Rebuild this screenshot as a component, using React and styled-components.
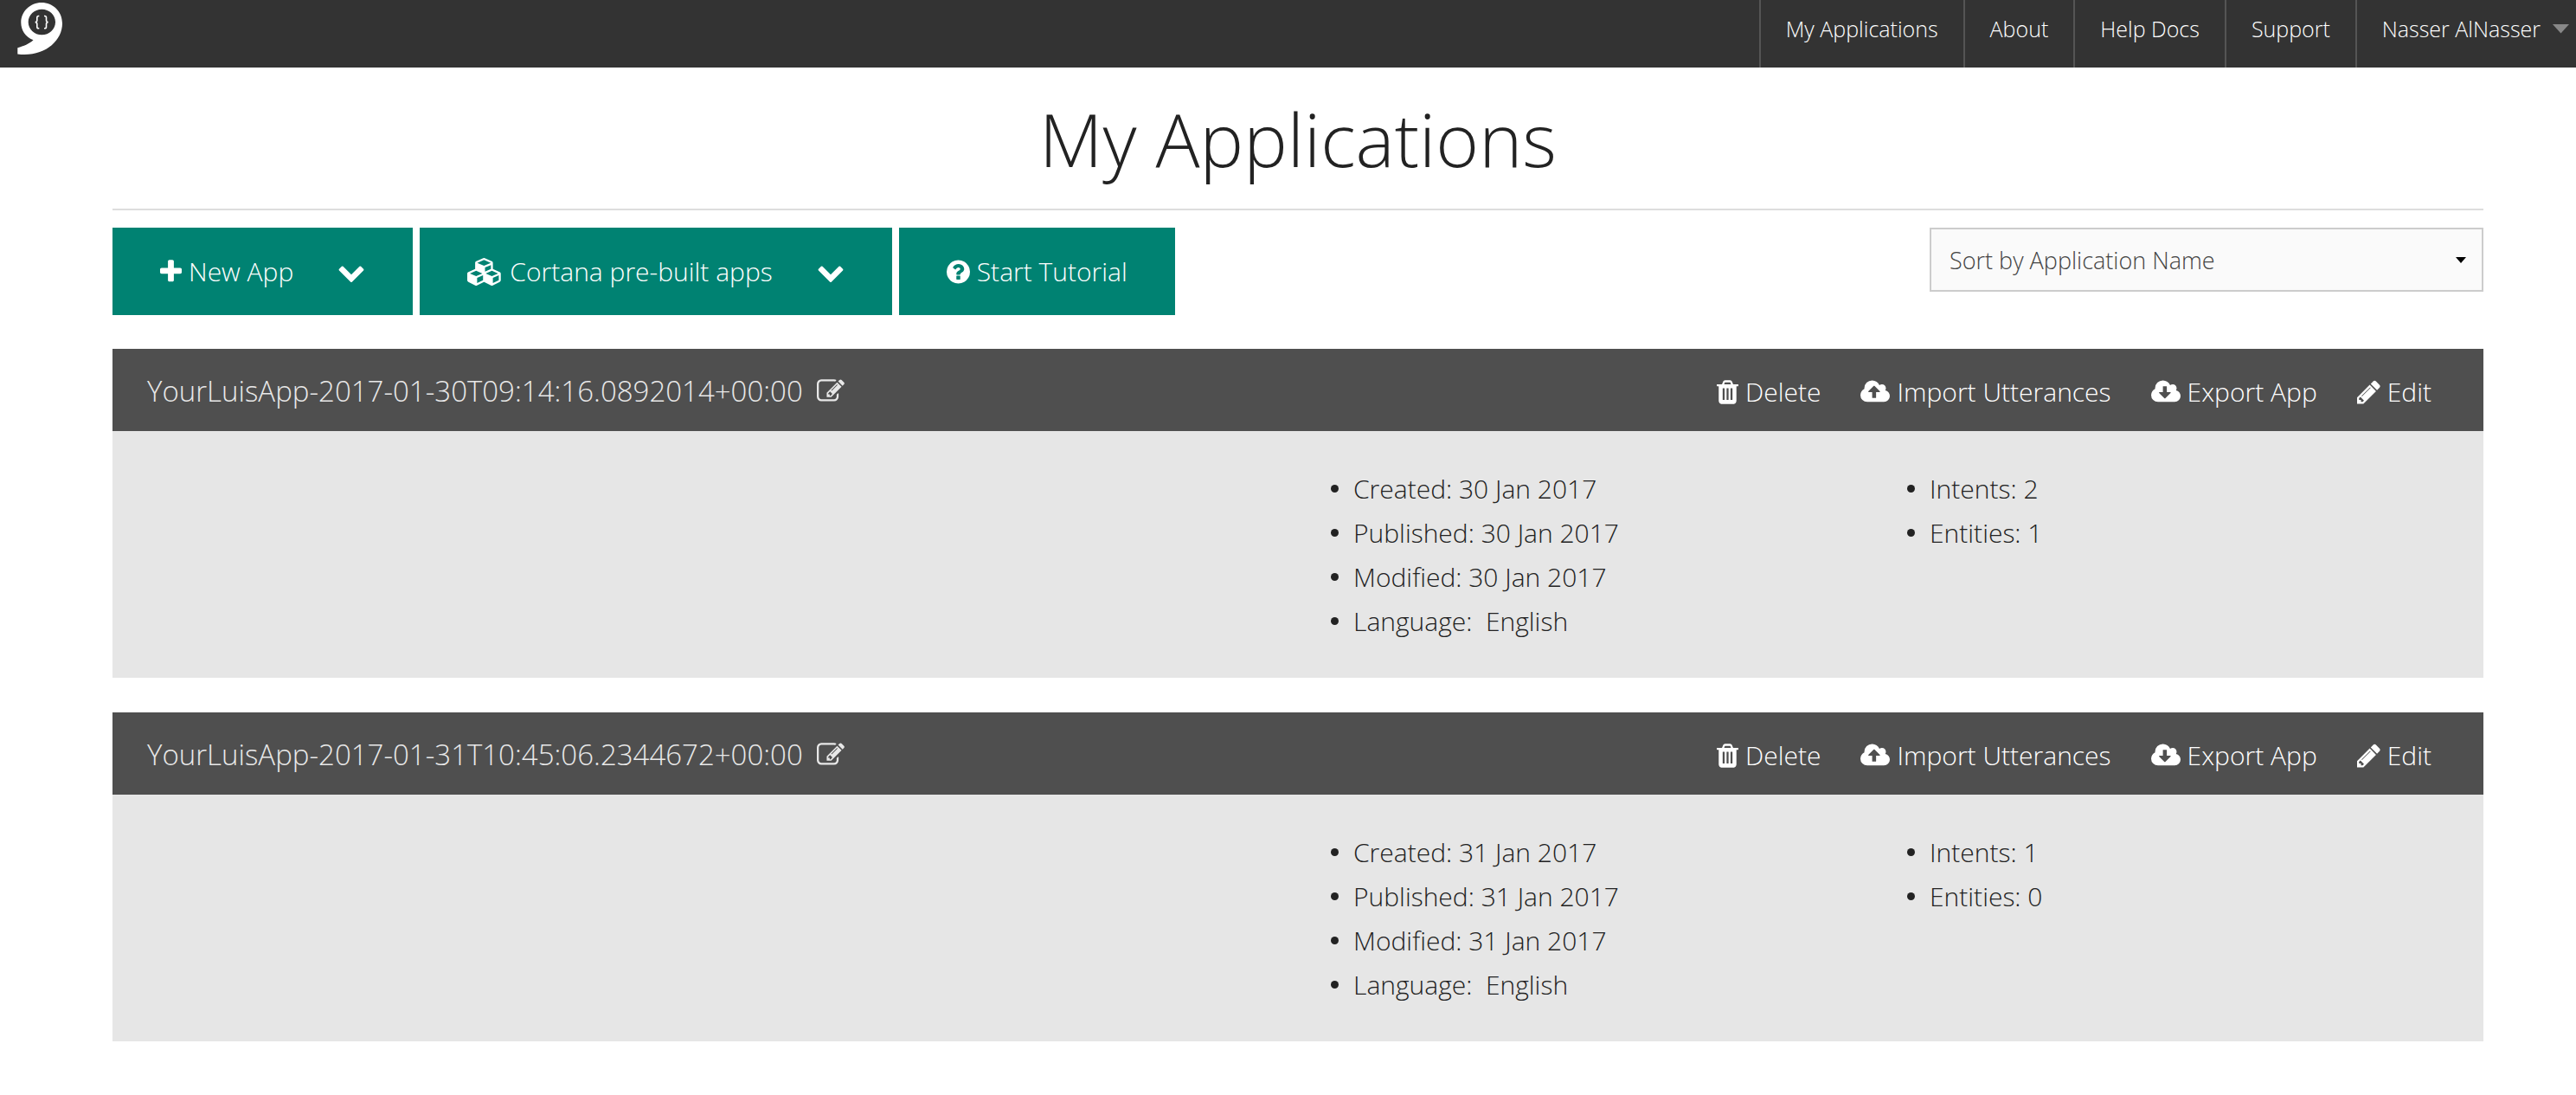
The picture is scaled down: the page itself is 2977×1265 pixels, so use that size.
import React from "react";
import styled, { createGlobalStyle } from "styled-components";

const GlobalStyle = createGlobalStyle`
  *, *::before, *::after { box-sizing: border-box; }
  body {
    margin: 0;
    background: #fff;
    color: #222;
    font-family: "Open Sans", "Noto Sans", sans-serif;
    font-size: 30px;
    font-weight: 300;
  }
  button, select { font: inherit; }
`;

/* ---------- icons ---------- */

const CLOUD =
  "m640 288q0 159-112.5 271.5t-271.5 112.5h-1088q-185 0-316.5-131.5t-131.5-316.5q0-130 70-240t188-165q-2-30-2-43 0-212 150-362t362-150q156 0 285.5 87t188.5 231q71-62 166-62 106 0 181 75t75 181q0 76-41 138 130 31 213.5 135.5t83.5 238.5z";

const ICONS = {
  plus: {
    x: 192, w: 1408, px: 25,
    d: "M1600 736v192q0 40-28 68t-68 28h-416v416q0 40-28 68t-68 28h-192q-40 0-68-28t-28-68v-416h-416q-40 0-68-28t-28-68v-192q0-40 28-68t68-28h416v-416q0-40 28-68t68-28h192q40 0 68 28t28 68v416h416q40 0 68 28t28 68z",
  },
  chevron: {
    x: 0, w: 1792, px: 32,
    d: "M1683 808l-742 741q-19 19-45 19t-45-19l-742-741q-19-19-19-45.5t19-45.5l166-165q19-19 45-19t45 19l531 531 531-531q19-19 45-19t45 19l166 165q19 19 19 45.5t-19 45.5z",
  },
  cubes: {
    x: 0, w: 2304, px: 41,
    d: "M640 1632l384-192v-314l-384 164v342zm-64-454l404-173-404-173-404 173zm1088 454l384-192v-314l-384 164v342zm-64-454l404-173-404-173-404 173zm-448-293l384-165v-266l-384 164v267zm-64-379l441-189-441-189-441 189zm1088 518v416q0 36-19 67t-52 47l-448 224q-25 14-57 14t-57-14l-448-224q-4-2-7-4-2 2-7 4l-448 224q-25 14-57 14t-57-14l-448-224q-33-16-52-47t-19-67v-416q0-38 21.5-70t56.5-48l434-186v-400q0-38 21.5-70t56.5-48l448-192q23-10 50-10t50 10l448 192q35 16 56.5 48t21.5 70v400l434 186q36 16 57 48t21 70z",
  },
  question: {
    x: 128, w: 1536, px: 27,
    d: "M1024 1376v-192q0-14-9-23t-23-9h-192q-14 0-23 9t-9 23v192q0 14 9 23t23 9h192q14 0 23-9t9-23zm256-672q0-88-55.5-163t-138.5-116-170-41q-243 0-371 213-15 24 8 42l132 100q7 6 19 6 16 0 25-12 53-68 86-92 34-24 86-24 48 0 85.5 26t37.5 59q0 38-20 61t-68 45q-63 28-115.5 86.5t-52.5 125.5v36q0 14 9 23t23 9h192q14 0 23-9t9-23q0-19 21.5-49.5t54.5-49.5q32-18 49-28.5t46-35 44.5-48 28-60.5 12.5-81zm384 192q0 209-103 385.5t-279.5 279.5-385.5 103-385.5-103-279.5-279.5-103-385.5 103-385.5 279.5-279.5 385.5-103 385.5 103 279.5 279.5 103 385.5z",
  },
  rename: {
    x: 0, w: 1792, px: 32,
    d: "M888 1184l116-116-152-152-116 116v56h96v96h56zm440-720q-16-16-33 1l-350 350q-17 17-1 33t33-1l350-350q17-17 1-33zm80 594v190q0 119-84.5 203.5t-203.5 84.5h-832q-119 0-203.5-84.5t-84.5-203.5v-832q0-119 84.5-203.5t203.5-84.5h832q63 0 117 25 15 7 18 23 3 17-9 29l-49 49q-14 14-32 8-23-6-45-6h-832q-66 0-113 47t-47 113v832q0 66 47 113t113 47h832q66 0 113-47t47-113v-126q0-13 9-22l64-64q15-15 35-7t20 29zm-96-738l288 288-672 672h-288v-288zm444 132l-92 92-288-288 92-92q28-28 68-28t68 28l152 152q28 28 28 68t-28 68z",
  },
  trash: {
    x: 192, w: 1408, px: 25,
    d: "M704 1376v-704q0-14-9-23t-23-9h-64q-14 0-23 9t-9 23v704q0 14 9 23t23 9h64q14 0 23-9t9-23zm256 0v-704q0-14-9-23t-23-9h-64q-14 0-23 9t-9 23v704q0 14 9 23t23 9h64q14 0 23-9t9-23zm256 0v-704q0-14-9-23t-23-9h-64q-14 0-23 9t-9 23v704q0 14 9 23t23 9h64q14 0 23-9t9-23zm-544-992h448l-48-117q-7-9-17-11h-317q-10 2-17 11zm928 32v64q0 14-9 23t-23 9h-96v948q0 83-47 143.5t-113 60.5h-832q-66 0-113-58.5t-47-141.5v-952h-96q-14 0-23-9t-9-23v-64q0-14 9-23t23-9h309l70-167q15-37 54-63t79-26h320q40 0 79 26t54 63l70 167h309q14 0 23 9t9 23z",
  },
  upload: {
    x: 0, w: 1920, px: 34,
    d: "M1280 864q0-14-9-23l-352-352q-9-9-23-9t-23 9l-351 351q-10 12-10 24 0 14 9 23t23 9h224v352q0 13 9.5 22.5t22.5 9.5h192q13 0 22.5-9.5t9.5-22.5v-352h224q13 0 22.5-9.5t9.5-22.5z" + CLOUD,
  },
  download: {
    x: 0, w: 1920, px: 34,
    d: "M1280 928q0-14-9-23t-23-9h-224v-352q0-13-9.5-22.5t-22.5-9.5h-192q-13 0-22.5 9.5t-9.5 22.5v352h-224q-13 0-22.5 9.5t-9.5 22.5q0 14 9 23l352 352q9 9 23 9t23-9l351-351q10-12 10-24zm640 224" + CLOUD.replace("m640 288", ""),
  },
  pencil: {
    x: 128, w: 1536, px: 27,
    d: "M491 1536l91-91-235-235-91 91v107h128v128h107zm523-928q0-22-22-22-10 0-17 7l-542 542q-7 7-7 17 0 22 22 22 10 0 17-7l542-542q7-7 7-17zm-54-192l416 416-832 832h-416v-416zm683 96q0 53-37 90l-166 166-416-416 166-165q36-38 90-38 53 0 91 38l235 234q37 39 37 91z",
  },
};

const IconSvg = styled.svg`
  display: block;
  flex: none;
  height: 32px;
  fill: currentColor;
`;

function Icon({ name }) {
  const { x, w, px, d } = ICONS[name];
  return (
    <IconSvg width={px} viewBox={`${x} 0 ${w} 1792`} aria-hidden="true">
      <path d={d} />
    </IconSvg>
  );
}

const Logo = () => (
  <svg width="56" height="64" viewBox="18 2 56 64" role="img" aria-label="LUIS">
    <path
      fill="#fff"
      fillRule="evenodd"
      d="M48 3C35 3 24.300 13.200 24.300 26C24.300 34.500 29 42.500 38.500 46.300C33.500 51 27.500 53 20.300 55.300V62.500C50 66.500 72 48 72 27C72 13 61 3 48 3ZM48.300 10.700C57 10.700 64 17.300 64 25.500C64 33.700 57 40.300 48.300 40.300C39.700 40.300 32.700 33.700 32.700 25.500C32.700 17.300 39.700 10.700 48.300 10.700Z"
    />
    <path
      fill="none"
      stroke="#fff"
      strokeWidth="1.6"
      d="M45.300 18.500H44.500Q42.800 18.500 42.800 20.300V23.500Q42.800 25.500 40.700 25.600Q42.800 25.700 42.800 27.700V30.900Q42.800 32.700 44.500 32.700H45.300M51 18.500H51.800Q53.500 18.500 53.500 20.300V23.500Q53.500 25.500 55.600 25.600Q53.500 25.700 53.500 27.700V30.900Q53.500 32.700 51.800 32.700H51"
    />
  </svg>
);

/* ---------- top bar ---------- */

const TopBar = styled.header`
  display: flex;
  justify-content: space-between;
  height: 78px;
  background: #333;
`;

const Home = styled.a`
  padding: 2px 18px;
`;

const Nav = styled.nav`
  display: flex;
  font-size: 25px;
  line-height: 67px;

  & > * {
    border: 0 solid #555;
    border-left-width: 2px;
    padding: 0 29px;
    color: #fff;
    white-space: nowrap;
  }
`;

const NavLink = styled.a`
  text-decoration: none;
`;

const UserMenu = styled.button`
  display: flex;
  align-items: flex-start;
  gap: 14px;
  background: none;
  line-height: inherit;

  && { padding-right: 8px; }
`;

const Caret = styled.svg`
  height: 67px;
  fill: #888;
`;

/* ---------- page ---------- */

const Main = styled.main`
  padding: 22px 107px 40px 130px;
`;

const PageTitle = styled.h1`
  margin: 0 0 20px;
  padding-bottom: 21px;
  border-bottom: 2px solid #ddd;
  font-size: 85px;
  font-weight: 300;
  line-height: 120px;
  text-align: center;
`;

const Toolbar = styled.div`
  display: flex;
  justify-content: space-between;
  align-items: flex-start;
`;

const ButtonGroup = styled.div`
  display: flex;
  gap: 8px;
`;

const ActionButton = styled.button`
  display: flex;
  align-items: center;
  gap: 51px;
  height: 101px;
  padding: 0 55px;
  border: 0;
  background: #008272;
  color: #fff;
  white-space: nowrap;
`;

const IconLabel = styled.span`
  display: flex;
  align-items: center;
  gap: 8px;
`;

const SortBox = styled.div`
  position: relative;
  width: 640px;
`;

const SortSelect = styled.select`
  display: block;
  width: 100%;
  height: 74px;
  padding: 0 48px 0 21px;
  border: 2px solid #ccc;
  border-radius: 0;
  appearance: none;
  background: #fafafa;
  color: #444;
  font-size: 27px;
`;

const SortArrow = styled.svg`
  position: absolute;
  top: 34px;
  right: 20px;
  pointer-events: none;
`;

/* ---------- application cards ---------- */

const Cards = styled.div`
  display: grid;
  gap: 40px;
  margin-top: 39px;
`;

const CardHeader = styled.header`
  display: flex;
  justify-content: space-between;
  align-items: center;
  height: 95px;
  padding: 2px 60px 0 40px;
  background: #4f4f4f;
`;

const AppTitle = styled.div`
  display: flex;
  align-items: center;
  gap: 16px;
  color: #e8e8e8;
`;

const AppName = styled.h2`
  margin: 0;
  font-size: 33px;
  font-weight: inherit;
`;

const PlainButton = styled.button`
  display: flex;
  align-items: center;
  gap: 8px;
  padding: 0;
  border: 0;
  background: none;
  color: inherit;
  white-space: nowrap;
`;

const CardActions = styled.div`
  display: flex;
  gap: 46px;
  padding-top: 2px;
  color: #fff;
`;

const CardBody = styled.div`
  display: grid;
  grid-template-columns: 1408fr 666fr 666fr;
  padding: 41px 0 40px;
  background: #e6e6e6;
`;

const Facts = styled.ul`
  margin: 0;
  padding: 0;
  list-style: none;
  line-height: 51px;

  &:first-child { grid-column-start: 2; }
`;

const Fact = styled.li`
  display: flex;
  align-items: center;
  gap: 17px;
  white-space: pre;

  &::before {
    content: "";
    width: 9px;
    height: 9px;
    border-radius: 50%;
    background: #222;
  }
`;

const APPS = [
  { name: "YourLuisApp-2017-01-30T09:14:16.0892014+00:00", date: "30 Jan 2017", intents: 2, entities: 1 },
  { name: "YourLuisApp-2017-01-31T10:45:06.2344672+00:00", date: "31 Jan 2017", intents: 1, entities: 0 },
];

const CARD_ACTIONS = [
  ["trash", "Delete"],
  ["upload", "Import Utterances"],
  ["download", "Export App"],
  ["pencil", "Edit"],
];

function AppCard({ app }) {
  return (
    <article>
      <CardHeader>
        <AppTitle>
          <AppName>{app.name}</AppName>
          <PlainButton type="button" aria-label="Rename">
            <Icon name="rename" />
          </PlainButton>
        </AppTitle>
        <CardActions>
          {CARD_ACTIONS.map(([icon, label]) => (
            <PlainButton type="button" key={label}>
              <Icon name={icon} />
              {label}
            </PlainButton>
          ))}
        </CardActions>
      </CardHeader>
      <CardBody>
        <Facts>
          <Fact>{`Created: ${app.date}`}</Fact>
          <Fact>{`Published: ${app.date}`}</Fact>
          <Fact>{`Modified: ${app.date}`}</Fact>
          <Fact>{"Language:  English"}</Fact>
        </Facts>
        <Facts>
          <Fact>{`Intents: ${app.intents}`}</Fact>
          <Fact>{`Entities: ${app.entities}`}</Fact>
        </Facts>
      </CardBody>
    </article>
  );
}

export default function App() {
  return (
    <>
      <GlobalStyle />
      <TopBar>
        <Home href="#home"><Logo /></Home>
        <Nav>
          <NavLink href="#applications">My Applications</NavLink>
          <NavLink href="#about">About</NavLink>
          <NavLink href="#docs">Help Docs</NavLink>
          <NavLink href="#support">Support</NavLink>
          <UserMenu type="button">
            Nasser AlNasser
            <Caret width="19" viewBox="0 0 19 67" aria-hidden="true">
              <path d="M0 28H19L9.500 38.500Z" />
            </Caret>
          </UserMenu>
        </Nav>
      </TopBar>
      <Main>
        <PageTitle>My Applications</PageTitle>
        <Toolbar>
          <ButtonGroup>
            <ActionButton type="button">
              <IconLabel><Icon name="plus" />New App</IconLabel>
              <Icon name="chevron" />
            </ActionButton>
            <ActionButton type="button">
              <IconLabel><Icon name="cubes" />Cortana pre-built apps</IconLabel>
              <Icon name="chevron" />
            </ActionButton>
            <ActionButton type="button">
              <IconLabel><Icon name="question" />Start Tutorial</IconLabel>
            </ActionButton>
          </ButtonGroup>
          <SortBox>
            <SortSelect aria-label="Sort applications" defaultValue="name">
              <option value="name">Sort by Application Name</option>
            </SortSelect>
            <SortArrow width="12" height="7" viewBox="0 0 12 7" aria-hidden="true">
              <path d="M0 0H12L6 7Z" />
            </SortArrow>
          </SortBox>
        </Toolbar>
        <Cards>
          {APPS.map((app) => <AppCard key={app.name} app={app} />)}
        </Cards>
      </Main>
    </>
  );
}
